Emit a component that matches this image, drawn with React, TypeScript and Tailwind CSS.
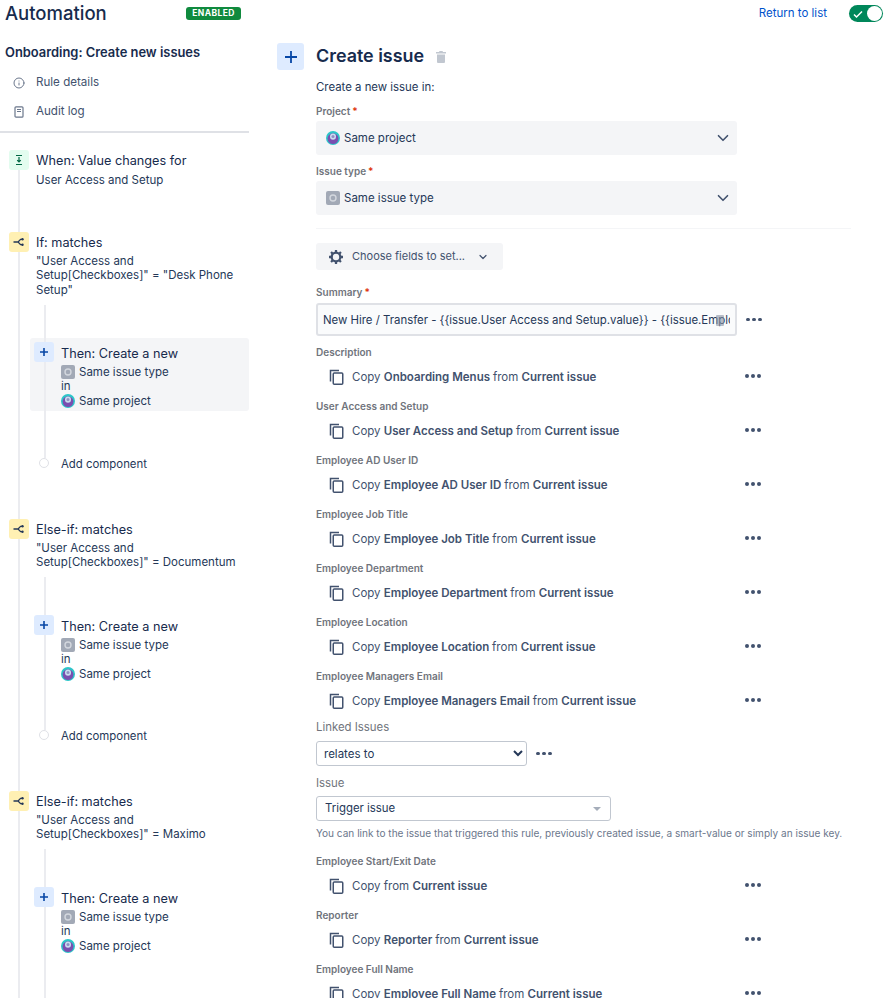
import { ChevronDown, Info } from 'lucide-react';
import type { ReactNode } from 'react';

const ProjectIcon = () => (
  <svg width="14" height="14" viewBox="0 0 14 14" className="shrink-0">
    <circle cx="7" cy="7" r="7" fill="#2cc5c9" />
    <circle cx="7" cy="7.6" r="5.4" fill="#7a4fb0" />
    <rect x="4" y="2.4" width="6" height="6.4" rx="3" fill="#c9dcf0" />
    <circle cx="7" cy="5.6" r="1.5" fill="#8f8fc4" />
  </svg>
);

const IssueTypeIcon = () => (
  <svg width="14" height="14" viewBox="0 0 14 14" className="shrink-0">
    <rect width="14" height="14" rx="2" fill="#a2a9b6" />
    <circle cx="7" cy="7" r="3" fill="none" stroke="#d3d7de" strokeWidth="1.4" />
  </svg>
);

const BranchIcon = () => (
  <svg width="12" height="12" viewBox="0 0 12 12" fill="none" stroke="#253858" strokeWidth="1.3">
    <path d="M0.5 6h4.5M5 6l2.6-2.6H9M5 6l2.6 2.6H9" />
    <circle cx="9.5" cy="3.2" r="1.2" fill="#253858" stroke="none" />
    <circle cx="9.5" cy="8.8" r="1.2" fill="#253858" stroke="none" />
  </svg>
);

const PlusBox = () => (
  <div className="relative z-20 w-5 h-5 rounded-[3px] bg-[#deebff] flex items-center justify-center shrink-0">
    <svg width="10" height="10" viewBox="0 0 10 10" stroke="#0747a6" strokeWidth="1.6">
      <path d="M5 1v8M1 5h8" />
    </svg>
  </div>
);

const CopyIcon = () => (
  <svg width="16" height="16" viewBox="0 0 16 16" fill="none" stroke="#42526e" strokeWidth="1.5" className="shrink-0">
    <path d="M1.5 12.5V1.5H10" />
    <rect x="4.25" y="4" width="9.5" height="11.25" rx="1" />
  </svg>
);

const Dots = () => (
  <div className="flex gap-[2.5px] shrink-0">
    <span className="w-[3.5px] h-[3.5px] rounded-full bg-[#42526e]" />
    <span className="w-[3.5px] h-[3.5px] rounded-full bg-[#42526e]" />
    <span className="w-[3.5px] h-[3.5px] rounded-full bg-[#42526e]" />
  </div>
);

const ThenCard = ({ active }: { active?: boolean }) => (
  <div className={`ml-[30px] h-[73px] rounded-[3px] pl-1 pt-1 flex gap-[7px] ${active ? 'bg-[#f4f5f7]' : ''}`}>
    <PlusBox />
    <div className="pt-[2px] text-[11.5px] leading-[14.4px] text-[#253858]">
      <div className="text-[12.7px] leading-[20px] text-[#172b4d] mb-[1px]">Then: Create a new</div>
      <div className="flex items-center gap-[4px]"><IssueTypeIcon />Same issue type</div>
      <div>in</div>
      <div className="flex items-center gap-[4px]"><ProjectIcon />Same project</div>
    </div>
  </div>
);

const ConditionBlock = ({
  label,
  lines,
  thenGap,
  addGap,
  active,
  last,
}: {
  label: string;
  lines: string[];
  thenGap: number;
  addGap: string;
  active?: boolean;
  last?: boolean;
}) => (
  <div className="relative">
    <div
      className={`absolute z-10 left-[44px] w-[2px] bg-[#ebecf0] ${last ? 'bottom-0' : 'bottom-[15px]'}`}
      style={{ top: lines.length === 3 ? 73 : 58 }}
    />
    <div className="flex gap-[7px] pl-[9px]" style={{ height: thenGap }}>
      <div className="w-5 h-5 rounded-[3px] bg-[#fff0b3] flex items-center justify-center shrink-0 relative">
        <BranchIcon />
      </div>
      <div className="pt-[1px] text-[11.5px] leading-[14.4px] text-[#253858]">
        <div className="text-[12.7px] leading-[20px] text-[#172b4d] mb-[1px]">{label}</div>
        {lines.map((line) => (
          <div key={line}>{line}</div>
        ))}
      </div>
    </div>
    <ThenCard active={active} />
    <div className={`flex items-center h-5 ${addGap}`}>
      <span className="relative z-20 ml-[39px] w-[10px] h-[10px] rounded-full border border-[#dfe1e6] bg-white" />
      <span className="ml-[12px] pt-[3px] text-[11.4px] text-[#253858]">Add component</span>
    </div>
  </div>
);

const FieldLabel = ({ children, required }: { children: ReactNode; required?: boolean }) => (
  <div className="text-[10px] leading-[14px] font-semibold text-[#70747c]">
    {children}
    {required && <span className="text-[#de350b] ml-[2px]">*</span>}
  </div>
);

const CopyField = ({ label, children }: { label: string; children: ReactNode }) => (
  <div className="h-[54px]">
    <FieldLabel>{label}</FieldLabel>
    <div className="flex items-center mt-[6px] h-[24px]">
      <div className="ml-[13px] mr-[7px]"><CopyIcon /></div>
      <div className="w-[393px] pt-[1px] text-[11.5px] text-[#42526e] whitespace-nowrap">{children}</div>
      <div className="mb-[2px]"><Dots /></div>
    </div>
  </div>
);

const GraySelect = ({ icon, text }: { icon: ReactNode; text: string }) => (
  <div className="h-[34px] w-[421px] rounded-[3px] bg-[#f4f5f7] flex items-center pl-[10px] pr-[5px] gap-[4px] text-[11.5px] text-[#253858]">
    {icon}
    <span className="flex-1 pt-[2px]">{text}</span>
    <ChevronDown size={18} strokeWidth={2.2} className="text-[#42526e]" />
  </div>
);

const copyRows: { label: string; field: string }[] = [
  { label: 'Description', field: 'Onboarding Menus' },
  { label: 'User Access and Setup', field: 'User Access and Setup' },
  { label: 'Employee AD User ID', field: 'Employee AD User ID' },
  { label: 'Employee Job Title', field: 'Employee Job Title' },
  { label: 'Employee Department', field: 'Employee Department' },
  { label: 'Employee Location', field: 'Employee Location' },
  { label: 'Employee Managers Email', field: 'Employee Managers Email' },
];

const CopyText = ({ field }: { field?: string }) => (
  <>
    Copy {field && <b className="font-semibold">{field} </b>}from <b className="font-semibold">Current issue</b>
  </>
);

export default function App() {
  return (
    <div className="w-[888px] h-[998px] overflow-hidden bg-white font-['Inter','Liberation_Sans',sans-serif]">
      <header className="h-[26px] flex items-center relative">
        <h1 className="ml-[5px] w-[181px] text-[18.5px] font-medium leading-[26px] text-[#172b4d]">Automation</h1>
        <span className="bg-[#108a3e] text-white text-[8.5px] font-bold tracking-[0.4px] rounded-[3px] w-[55px] h-[13px] flex items-center justify-center">
          ENABLED
        </span>
        <a className="ml-auto mr-[22px] pt-[1px] text-[11.5px] text-[#0052cc]">Return to list</a>
        <div className="mr-[5px] w-[34px] h-[17px] rounded-full bg-[#00875a] flex items-center justify-end pr-[1px] relative">
          <svg width="10" height="10" viewBox="0 0 10 10" className="absolute left-[4px] top-[4px]" fill="none" stroke="white" strokeWidth="1.5">
            <path d="M1 5.5l2.5 2.5L9 2.5" />
          </svg>
          <span className="w-[15px] h-[15px] rounded-full bg-white" />
        </div>
      </header>

      <div className="flex">
        <aside className="w-[249px] shrink-0">
          <div className="ml-[5px] mt-[17px] h-[20px] text-[12.9px] leading-[20px] font-semibold text-[#172b4d]">
            Onboarding: Create new issues
          </div>
          <div className="mt-[5px] flex items-center h-[29px] text-[11.6px] text-[#42526e]">
            <Info size={12} className="ml-[13px] mr-[11px] text-[#6b778c]" />
            Rule details
          </div>
          <div className="flex items-center h-[29px] text-[11.6px] text-[#42526e]">
            <svg width="12" height="12" viewBox="0 0 12 12" fill="none" stroke="#6b778c" strokeWidth="1.2" className="ml-[13px] mr-[11px]">
              <rect x="2" y="0.8" width="8" height="10.4" rx="1" />
              <path d="M4 3.5h4M4 5.5h4" />
            </svg>
            Audit log
          </div>
          <div className="mt-[5px] h-[2px] bg-[#dfe1e6]" />

          <div className="relative pt-[17px]">
            <div className="absolute left-[18px] top-[37px] bottom-0 w-[2px] bg-[#ebecf0]" />
            <div className="flex gap-[7px] pl-[9px] h-[82px] relative">
              <div className="w-5 h-5 rounded-[3px] bg-[#e3fcef] flex items-center justify-center shrink-0">
                <svg width="12" height="12" viewBox="0 0 12 12" fill="none" stroke="#006644" strokeWidth="1.2">
                  <path d="M3 1.5h6M3 10.5h6" />
                  <path d="M6 3v5M4.2 6.2L6 8l1.8-1.8" />
                </svg>
              </div>
              <div className="pt-[1px] text-[11.5px] leading-[14.4px] text-[#253858]">
                <div className="text-[12.7px] leading-[20px] text-[#172b4d] mb-[2px]">When: Value changes for</div>
                User Access and Setup
              </div>
            </div>
            <ConditionBlock
              label="If: matches"
              lines={['"User Access and', 'Setup[Checkboxes]" = "Desk Phone', 'Setup"']}
              thenGap={106}
              addGap="mt-[42px]"
              active
            />
            <div className="mt-[46px]">
              <ConditionBlock
                label="Else-if: matches"
                lines={['"User Access and', 'Setup[Checkboxes]" = Documentum']}
                thenGap={92}
                addGap="mt-[41px]"
              />
            </div>
            <div className="mt-[46px]">
              <ConditionBlock
                label="Else-if: matches"
                lines={['"User Access and', 'Setup[Checkboxes]" = Maximo']}
                thenGap={92}
                addGap="mt-[42px]"
                last
              />
            </div>
          </div>
        </aside>

        <main className="ml-[28px] flex-1 flex gap-[12px] pt-[17px]">
          <div className="w-[27px] h-[27px] rounded-[3px] bg-[#deebff] flex items-center justify-center shrink-0">
            <svg width="14" height="14" viewBox="0 0 14 14" stroke="#0747a6" strokeWidth="1.8">
              <path d="M7 1v12M1 7h12" />
            </svg>
          </div>
          <div className="flex-1">
            <div className="flex items-center h-[26px]">
              <h2 className="text-[17.9px] font-semibold leading-[26px] text-[#172b4d]">Create issue</h2>
              <svg width="10" height="12" viewBox="0 0 10 12" fill="#c1c7d0" className="ml-[12px] mt-[1px]">
                <path d="M3.5 0h3l.5 1h3v1.5H0V1h3zM1 3.5h8V11a1 1 0 01-1 1H2a1 1 0 01-1-1z" />
              </svg>
            </div>
            <p className="mt-[10px] text-[11.4px] leading-[16px] text-[#253858]">Create a new issue in:</p>
            <div className="mt-[9px] mb-[3px]"><FieldLabel required>Project</FieldLabel></div>
            <GraySelect icon={<ProjectIcon />} text="Same project" />
            <div className="mt-[9px] mb-[3px]"><FieldLabel required>Issue type</FieldLabel></div>
            <GraySelect icon={<IssueTypeIcon />} text="Same issue type" />
            <div className="mt-[13px] h-[1px] w-[535px] bg-[#f4f5f7]" />
            <div className="mt-[14px] w-[187px] h-[27px] rounded-[3px] bg-[#f4f5f7] flex items-center pl-[12px] text-[11px] text-[#42526e]">
              <svg width="16" height="16" viewBox="0 0 24 24" fill="none" stroke="#42526e" strokeWidth="3.4" className="mr-[8px]">
                <circle cx="12" cy="12" r="6.5" />
                <path d="M12 1.5v4M12 18.5v4M1.5 12h4M18.5 12h4M4.6 4.6l2.8 2.8M16.6 16.6l2.8 2.8M19.4 4.6l-2.8 2.8M7.4 16.6l-2.8 2.8" />
              </svg>
              Choose fields to set...
              <ChevronDown size={12} strokeWidth={2.4} className="ml-[12px]" />
            </div>
            <div className="mt-[15px] mb-[4px]"><FieldLabel required>Summary</FieldLabel></div>
            <div className="flex items-center h-[33px]">
              <div className="relative w-[421px] h-[33px] mr-[9px]">
                <input
                  readOnly
                  value="New Hire / Transfer - {{issue.User Access and Setup.value}} - {{issue.Employee Full Name}}"
                  className="w-full h-full rounded-[3px] border-2 border-[#dfe1e6] bg-[#fafbfc] px-[5px] pt-[1px] text-[11.4px] text-[#253858] outline-none"
                />
                <span className="absolute right-[13px] top-[12px] w-[8px] h-[11px] bg-[#8993a4]/60 rounded-[1px]" />
              </div>
              <Dots />
            </div>
            <div className="mt-[9px]">
              {copyRows.map((row) => (
                <CopyField key={row.label} label={row.label}>
                  <CopyText field={row.field} />
                </CopyField>
              ))}
            </div>
            <div className="-mt-[4px] text-[11.4px] leading-[16px] text-[#70747c]">Linked Issues</div>
            <div className="mt-[6px] flex items-center">
              <select className="w-[211px] h-[25px] rounded-[3px] border border-[#c1c7d0] bg-white pl-[3px] text-[11.5px] text-[#253858]" defaultValue="relates to">
                <option>relates to</option>
              </select>
              <div className="ml-[9px]"><Dots /></div>
            </div>
            <div className="mt-[9px] text-[11.4px] leading-[16px] text-[#70747c]">Issue</div>
            <div className="mt-[5px] w-[295px] h-[25px] rounded-[3px] border border-[#c1c7d0] flex items-center justify-between pl-[8px] pr-[9px] text-[11.4px] text-[#253858]">
              <span className="pt-[1px]">Trigger issue</span>
              <span className="w-0 h-0 border-x-[4.5px] border-x-transparent border-t-[4.5px] border-t-[#a5adba]" />
            </div>
            <p className="mt-[5px] text-[10.07px] leading-[14px] text-[#6b778c] whitespace-nowrap">
              You can link to the issue that triggered this rule, previously created issue, a smart-value or simply an issue key.
            </p>
            <div className="mt-[14px]">
              <CopyField label="Employee Start/Exit Date"><CopyText /></CopyField>
              <CopyField label="Reporter"><CopyText field="Reporter" /></CopyField>
              <CopyField label="Employee Full Name"><CopyText field="Employee Full Name" /></CopyField>
            </div>
          </div>
        </main>
      </div>
    </div>
  );
}
